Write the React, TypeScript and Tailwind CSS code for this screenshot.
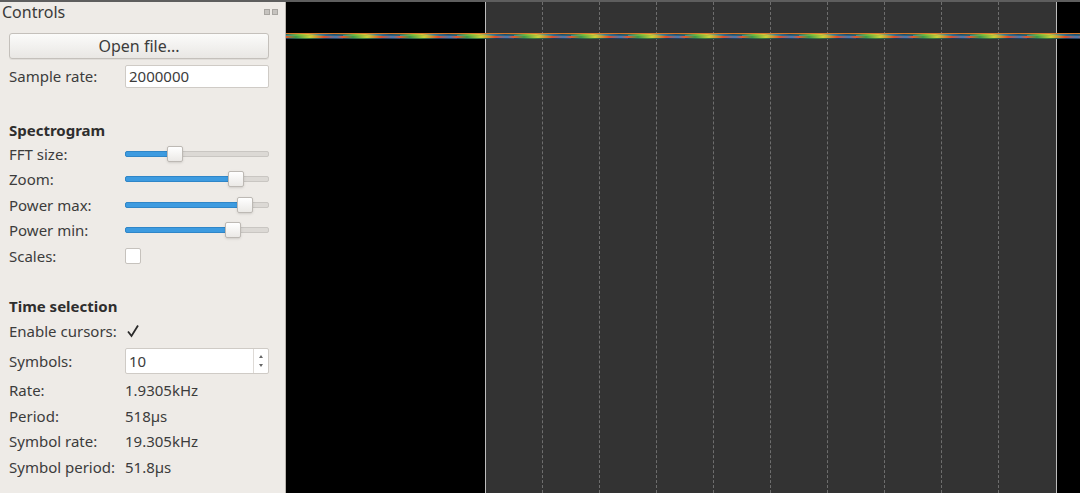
import React from 'react';

const font = { fontFamily: '"Noto Sans", "DejaVu Sans", sans-serif' };

const Slider: React.FC<{ pos: number }> = ({ pos }) => (
  <div className="relative w-[144px] h-[16px] flex items-center">
    <div className="w-full h-[6px] rounded-[2px] bg-[#dcd9d5] border border-[#c9c6c2]" />
    <div
      className="absolute left-0 top-[5px] h-[6px] rounded-[2px] bg-[#3d9be0] border border-[#2f86c8]"
      style={{ width: pos }}
    />
    <div
      className="absolute top-0 w-[16px] h-[16px] rounded-[2px] border border-[#bdb9b4] bg-gradient-to-b from-white to-[#ebe9e6] shadow-sm"
      style={{ left: pos - 8 }}
    />
  </div>
);

const Row: React.FC<{ label: string; children: React.ReactNode; h?: string }> = ({ label, children, h = 'h-[25.5px]' }) => (
  <div className={`flex items-center ${h}`}>
    <span className="w-[116px] shrink-0 whitespace-nowrap">{label}</span>
    {children}
  </div>
);

const SignalBand: React.FC = () => (
  <div className="absolute left-0 right-0 top-[31px] flex flex-col">
    <div className="h-[1px] bg-[#d8782a]" />
    <div className="h-[1px] bg-[repeating-linear-gradient(90deg,#2f6a5a_0px,#8ac23a_14px,#d6c23a_22px,#3a7a9a_34px,#1f4a6a_48px,#2f6a5a_57px)]" />
    <div className="h-[1px] bg-[repeating-linear-gradient(90deg,#3a8a9a_0px,#6ab83a_12px,#c8c23a_26px,#2f6a8a_40px,#2a5a7a_57px)]" />
    <div className="h-[2px] bg-[repeating-linear-gradient(90deg,#e8582a_0px,#3f9a4a_10px,#c8d23a_24px,#e0502a_38px,#4a7ab0_50px,#e8582a_57px)]" />
    <div className="h-[1px] bg-[repeating-linear-gradient(90deg,#1f3a5a_0px,#3a7a3a_20px,#1f3a5a_40px,#2a4a6a_57px)]" />
  </div>
);

export default function App() {
  return (
    <div className="w-[1080px] h-[493px] flex flex-col overflow-hidden text-[15px] text-[#3c3c3c]" style={font}>
      <div className="h-[2px] bg-[#5e5e5e] shrink-0" />
      <div className="flex flex-1 min-h-0">
        {/* Controls dock */}
        <div className="w-[286px] shrink-0 bg-[#eeebe7] border-r border-[#b8b4ae] flex flex-col">
          <div className="flex items-center justify-between h-[20px] pl-[2px] pr-[7px]">
            <span className="text-[16px] text-[#3a3a3a]">Controls</span>
            <div className="flex gap-[2px]">
              <div className="w-[6px] h-[6px] bg-[#c6c3bf] border border-[#a9a6a2]" />
              <div className="w-[6px] h-[6px] bg-[#c6c3bf] border border-[#a9a6a2]" />
            </div>
          </div>

          <div className="flex flex-col pl-[9px] pr-[16px]">
            <button className="mt-[11px] h-[26px] w-full rounded-[3px] border border-[#c4c0bb] bg-gradient-to-b from-[#fbfbfa] to-[#e9e7e4] text-[16px] text-[#3c3c3c] shadow-[0_1px_0_rgba(0,0,0,0.06)]">
              Open file...
            </button>
            <Row label="Sample rate:" h="h-[30px] mt-[2px]">
              <div className="h-[23px] flex-1 bg-white border border-[#cfcbc6] rounded-[2px] flex items-center px-[3px] text-[#3c3c3c]">
                2000000
              </div>
            </Row>

            <div className="mt-[28px] font-bold h-[22px] flex items-center text-[#2e2e2e]">Spectrogram</div>
            <Row label="FFT size:"><Slider pos={50} /></Row>
            <Row label="Zoom:"><Slider pos={111} /></Row>
            <Row label="Power max:"><Slider pos={120} /></Row>
            <Row label="Power min:"><Slider pos={108} /></Row>
            <Row label="Scales:">
              <div className="w-[16px] h-[16px] bg-white border border-[#c6c2bd] rounded-[2px]" />
            </Row>

            <div className="mt-[26.5px] font-bold h-[22px] flex items-center text-[#2e2e2e]">Time selection</div>
            <Row label="Enable cursors:" h="h-[28px]">
              <div className="w-[16px] h-[16px] flex items-center justify-center">
                <svg width="14" height="14" viewBox="0 0 14 14">
                  <path d="M2 7.5 L5.5 12 L12 1.5" fill="none" stroke="#2a2a2a" strokeWidth="1.8" />
                </svg>
              </div>
            </Row>
            <Row label="Symbols:" h="h-[32px]">
              <div className="h-[26px] flex-1 bg-white border border-[#cfcbc6] rounded-[2px] flex items-stretch">
                <div className="flex-1 flex items-center px-[3px]">10</div>
                <div className="w-[15px] border-l border-[#dedad6] flex flex-col items-center justify-center gap-[6px]">
                  <div className="w-0 h-0 border-l-[2px] border-r-[2px] border-b-[3px] border-l-transparent border-r-transparent border-b-[#666]" />
                  <div className="w-0 h-0 border-l-[2px] border-r-[2px] border-t-[3px] border-l-transparent border-r-transparent border-t-[#666]" />
                </div>
              </div>
            </Row>
            <Row label="Rate:" h="h-[26px]"><span>1.9305kHz</span></Row>
            <Row label="Period:"><span>518µs</span></Row>
            <Row label="Symbol rate:"><span>19.305kHz</span></Row>
            <Row label="Symbol period:"><span>51.8µs</span></Row>
          </div>
        </div>

        {/* Spectrogram canvas */}
        <div className="relative flex-1 bg-black overflow-hidden">
          <div className="absolute top-0 bottom-0 left-[199px] w-[572px] bg-[#333333] border-l border-r border-[#bdbdbd] grid grid-cols-10">
            {Array.from({ length: 10 }).map((_, i) => (
              <div key={i} className={i < 9 ? 'border-r border-dashed border-[#6e6e6e]' : ''} />
            ))}
          </div>
          <SignalBand />
        </div>
      </div>
    </div>
  );
}
